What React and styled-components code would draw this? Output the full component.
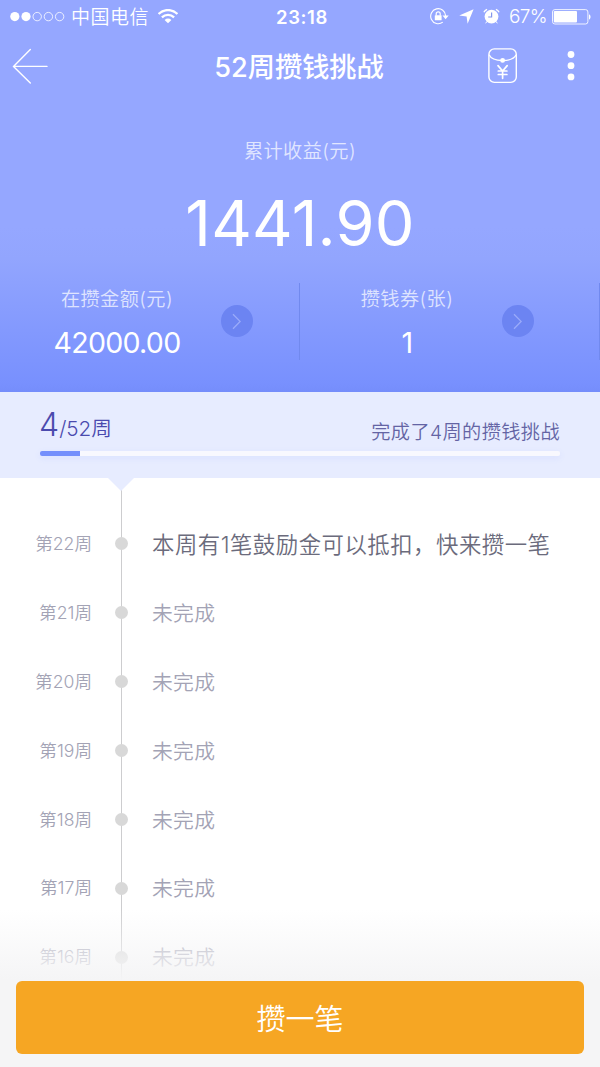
import styled, { createGlobalStyle } from "styled-components";

const GlobalStyle = createGlobalStyle`
  :root {
    --white: #ffffff;
    --blue: #748ffc;
    --pale-blue: #e7ecff;
    --indigo: #4a4aae;
    --orange: #f6a623;
    --grey-line: #cdcdcf;
    --grey-dot: #d8d8d8;
  }

  *,
  *::before,
  *::after {
    box-sizing: border-box;
    margin: 0;
    padding: 0;
  }

  body {
    background-color: #f5f5f6;
    font-family: Inter, "Noto Sans CJK SC", sans-serif;
    font-weight: 350;
  }
`;

const Screen = styled.div`
  display: flex;
  flex-direction: column;
  width: 600px;
  height: 1067px;
  overflow: hidden;
  background-color: var(--white);
`;

/* one line of text in a box of fixed height */
const Line = styled.span`
  display: block;
  height: ${({ $height }) => $height}px;
  line-height: ${({ $height }) => $height}px;
  white-space: nowrap;
`;

const Hero = styled.header`
  flex: none;
  display: flex;
  flex-direction: column;
  height: 392px;
  color: var(--white);
  background: linear-gradient(
    180deg,
    #95a7ff 0%,
    #95a7ff 58%,
    #92a5fe 66%,
    #7890fe 98%,
    #758dfb 100%
  );
`;

const StatusBarEl = styled.div`
  display: grid;
  grid-template-columns: 1fr auto 1fr;
  align-items: center;
  height: 33px;
  padding: 0 9px 0 10px;
`;

const StatusGroup = styled.div`
  display: flex;
  align-items: center;
  justify-content: ${({ $end }) => ($end ? "flex-end" : "flex-start")};
`;

const Carrier = styled(Line)`
  margin: 0 9px 0 6px;
  padding-top: 1px;
  font-size: 19px;
  letter-spacing: 0.5px;
`;

const Clock = styled(Line)`
  padding-left: 3px;
  font-size: 18.5px;
  font-weight: 600;
  letter-spacing: 0.6px;
`;

const Percent = styled(Line)`
  margin: 0 5px 0 9px;
  font-size: 19px;
  letter-spacing: -0.6px;
`;

const IconGap = styled.svg`
  flex: none;
  margin-left: ${({ $gap }) => $gap || 0}px;
`;

const NavBar = styled.nav`
  display: grid;
  grid-template-columns: 1fr auto 1fr;
  align-items: center;
  height: 66px;
  padding: 0 24px 0 12px;
`;

const NavActions = styled.div`
  display: flex;
  align-items: center;
  justify-content: flex-end;
  gap: 49px;
`;

const IconButton = styled.button`
  display: block;
  width: max-content;
  border: none;
  outline: none;
  background: none;
  color: inherit;
  cursor: pointer;

  svg {
    display: block;
  }
`;

const Title = styled.h1`
  height: 36px;
  padding: 2px 0 0 10px;
  font-size: 27.2px;
  font-weight: 500;
  line-height: 36px;
  white-space: nowrap;
`;

const Earnings = styled.section`
  display: flex;
  flex-direction: column;
  align-items: center;
  padding-top: 38px;
`;

const Label = styled(Line)`
  font-size: 19.2px;
  letter-spacing: 0.4px;
  opacity: 0.72;
`;

const Amount = styled(Line)`
  margin-top: 27px;
  font-size: 63px;
  font-weight: 400;
  letter-spacing: 0.2px;
`;

const Stats = styled.section`
  display: grid;
  grid-template-columns: 1fr 1fr;
  margin-top: 29px;
`;

const StatEl = styled.div`
  display: flex;
  align-items: center;
  height: 77px;
  padding-left: ${({ $left }) => $left}px;
  border-right: 1px solid #7189ee;
`;

const StatText = styled.div`
  display: flex;
  flex-direction: column;
  align-items: center;
  width: ${({ $width }) => $width}px;
  padding-top: 2px;
`;

const StatValue = styled(Line)`
  margin-top: 13px;
  font-size: 28.6px;
  font-weight: 400;
  letter-spacing: -0.75px;
`;

const Round = styled(IconButton)`
  display: flex;
  align-items: center;
  justify-content: center;
  width: 32px;
  height: 32px;
  margin: 0 0 1px ${({ $gap }) => $gap}px;
  border-radius: 50%;
  background-color: #6c84f2;
`;

const Progress = styled.section`
  flex: none;
  height: 86px;
  padding: 17px 40px 0;
  background-color: var(--pale-blue);
`;

const ProgressHead = styled.div`
  display: flex;
  justify-content: space-between;
  height: 42px;
`;

const Count = styled(Line)`
  margin-left: -1px;
  color: var(--indigo);
  font-size: 20.7px;

  strong {
    font-size: 32px;
    font-weight: 350;
  }
`;

const Summary = styled(Line)`
  padding-top: 9px;
  color: #6464a4;
  font-size: 19.2px;
  letter-spacing: 0.4px;
`;

const Track = styled.div`
  height: 5px;
  border-radius: 2px;
  background-color: #f8f8fe;
  box-shadow: 0 2px 6px rgba(116, 143, 252, 0.12);
  overflow: hidden;
`;

const Fill = styled.div`
  height: 100%;
  background-color: var(--blue);
`;

const Timeline = styled.ul`
  position: relative;
  flex: none;
  height: 502px;
  padding-top: 31.5px;
  list-style: none;

  &::before {
    content: "";
    position: absolute;
    top: 0;
    bottom: 0;
    left: 121px;
    width: 1px;
    background-color: var(--grey-line);
  }

  &::after {
    content: "";
    position: absolute;
    top: 0;
    left: 108px;
    border: 13.5px solid transparent;
    border-top-color: var(--pale-blue);
    border-bottom: none;
  }
`;

const Week = styled.li`
  position: relative;
  display: grid;
  grid-template-columns: 92px 60px 1fr;
  align-items: center;
  height: 68.9px;
  color: ${({ $current }) => ($current ? "#6b6b7c" : "#a3a3b5")};
`;

const WeekName = styled(Line)`
  color: #a3a3b5;
  font-size: 17.6px;
  text-align: right;
`;

const Dot = styled.span`
  width: 13px;
  height: 13px;
  margin-left: 23px;
  border-radius: 50%;
  background-color: var(--grey-dot);
`;

const WeekText = styled(Line)`
  padding-top: 1px;
  font-size: ${({ $current }) => ($current ? 22.4 : 20.8)}px;
  letter-spacing: ${({ $current }) => ($current ? 0.5 : 0.3)}px;
`;

/* fades the end of the list out behind the button */
const Footer = styled.footer`
  position: relative;
  flex: none;
  height: 157px;
  margin-top: -70px;
  padding: 71px 16px 0;
  background: linear-gradient(
    180deg,
    rgba(245, 245, 246, 0) 0px,
    rgba(245, 245, 246, 0.6) 42px,
    #f5f5f6 70px
  );
`;

const SaveButton = styled.button`
  display: flex;
  align-items: center;
  justify-content: center;
  width: 100%;
  height: 73px;
  padding-bottom: 2px;
  border: none;
  border-radius: 6px;
  background-color: var(--orange);
  color: var(--white);
  font-family: inherit;
  font-size: 29px;
  font-weight: 350;
  cursor: pointer;
`;

const Signal = function () {
  return (
    <IconGap width="55" height="12" viewBox="0 0 55 12">
      {[0, 1, 2, 3, 4].map((i) => (
        <circle
          key={i}
          cx={4.8 + i * 11.2}
          cy="5.6"
          r={i < 2 ? 4.6 : 4.2}
          fill={i < 2 ? "#fff" : "none"}
          stroke={i < 2 ? "none" : "#fff"}
          strokeWidth="0.8"
        />
      ))}
    </IconGap>
  );
};

const Wifi = function () {
  return (
    <IconGap width="20" height="15" viewBox="0 0 20 15" fill="none">
      <path d="M.6 5C6-.2 14-.2 19.4 5" stroke="#fff" strokeWidth="2.4" />
      <path
        d="M3.9 8.3C7.4 5 12.6 5 16.1 8.3"
        stroke="#fff"
        strokeWidth="2.3"
      />
      <path d="M6.6 10.9C8.7 9 11.3 9 13.4 10.9L10 14.3Z" fill="#fff" />
    </IconGap>
  );
};

const RotationLock = function () {
  return (
    <IconGap width="19" height="17" viewBox="0 0 19 17" fill="none">
      <path
        d="M12.8 14.1A7.5 7.5 0 1 1 15.7 8"
        stroke="#fff"
        strokeWidth="1.1"
      />
      <path d="M12.5 7.6H18.7L15.6 11.2Z" fill="#fff" />
      <rect x="4.8" y="7.2" width="6.8" height="5" rx="0.5" fill="#fff" />
      <path
        d="M6.2 7.6V5.8a2 2 0 0 1 4 0V7.6"
        stroke="#fff"
        strokeWidth="1.2"
      />
    </IconGap>
  );
};

const Location = function () {
  return (
    <IconGap $gap={9.5} width="15" height="15" viewBox="0 0 15 15">
      <path d="M14.6.3L8.6 14.8 7.6 7.6.2 6.6Z" fill="#fff" />
    </IconGap>
  );
};

const Alarm = function () {
  return (
    <IconGap $gap={9} width="17" height="17" viewBox="0 0 17 17" fill="none">
      <circle cx="8.5" cy="8.6" r="6.9" fill="#fff" />
      <path
        d="M.9 4.2A6 6 0 0 1 4.1 1.3M16.1 4.2A6 6 0 0 0 12.9 1.3"
        stroke="#fff"
        strokeWidth="1.4"
      />
      <path d="M3.8 13.6L2.7 15.3M13.2 13.6L14.3 15.3" stroke="#fff" />
      <path d="M8.6 4.4V9H5.2" stroke="#8396ed" strokeWidth="1.2" />
    </IconGap>
  );
};

const Battery = function () {
  return (
    <IconGap width="39" height="16" viewBox="0 0 39 16" fill="none">
      <rect
        x="0.5"
        y="0.6"
        width="35.4"
        height="14.4"
        rx="2.4"
        stroke="#fff"
        strokeOpacity="0.85"
      />
      <rect x="1.8" y="2" width="23.2" height="11.6" rx="1" fill="#fff" />
      <path d="M37 5.2C39 6 39 9.8 37 10.6Z" fill="#fff" />
    </IconGap>
  );
};

const StatusBar = function () {
  return (
    <StatusBarEl>
      <StatusGroup>
        <Signal />
        <Carrier $height={26}>中国电信</Carrier>
        <Wifi />
      </StatusGroup>
      <Clock $height={24}>23:18</Clock>
      <StatusGroup $end>
        <RotationLock />
        <Location />
        <Alarm />
        <Percent $height={24}>67%</Percent>
        <Battery />
      </StatusGroup>
    </StatusBarEl>
  );
};

const BackIcon = function () {
  return (
    <svg width="37" height="36" viewBox="0 0 37 36" fill="none">
      <path
        d="M18.3 1.6L1.5 18.4 18.3 35.1M1.5 18.4H35"
        stroke="#fff"
        strokeWidth="1.4"
        strokeLinecap="round"
      />
    </svg>
  );
};

const PurseIcon = function () {
  return (
    <svg width="29" height="36" viewBox="0 0 29 36" fill="none">
      <rect
        x="0.9"
        y="0.9"
        width="27.4"
        height="33.5"
        rx="5.5"
        stroke="#fff"
        strokeWidth="1.4"
      />
      <path
        d="M1.1 6.8C4.5 14.4 24.7 14.4 28.1 6.8"
        stroke="#fff"
        strokeWidth="1.3"
      />
      <circle cx="14.6" cy="12.4" r="2.4" fill="#fff" />
      <path
        d="M10 17.6L14.6 23 19.2 17.6M14.6 23V30.3M10.3 23H18.9M10.3 26.5H18.9"
        stroke="#fff"
        strokeWidth="1.7"
        strokeLinecap="round"
      />
    </svg>
  );
};

const MoreIcon = function () {
  return (
    <svg width="10" height="32" viewBox="0 0 10 32" fill="#fff">
      <circle cx="5" cy="4.5" r="3.4" />
      <circle cx="5" cy="15.7" r="3.4" />
      <circle cx="5" cy="26.9" r="3.4" />
    </svg>
  );
};

const Stat = function ({ label, value, left, width, gap }) {
  return (
    <StatEl $left={left}>
      <StatText $width={width}>
        <Label $height={28}>{label}</Label>
        <StatValue $height={34}>{value}</StatValue>
      </StatText>
      <Round $gap={gap}>
        <svg width="10" height="17" viewBox="0 0 10 17" fill="none">
          <path d="M1 1.2L8.1 8.4 1 15.7" stroke="#9aabfa" strokeWidth="1.3" />
        </svg>
      </Round>
    </StatEl>
  );
};

const weeks = [22, 21, 20, 19, 18, 17, 16];
const done = 4;
const total = 52;

export default function App() {
  return (
    <Screen>
      <GlobalStyle />
      <Hero>
        <StatusBar />
        <NavBar>
          <IconButton aria-label="返回">
            <BackIcon />
          </IconButton>
          <Title>52周攒钱挑战</Title>
          <NavActions>
            <IconButton aria-label="红包">
              <PurseIcon />
            </IconButton>
            <IconButton aria-label="更多">
              <MoreIcon />
            </IconButton>
          </NavActions>
        </NavBar>
        <Earnings>
          <Label $height={28}>累计收益(元)</Label>
          <Amount $height={62}>1441.90</Amount>
        </Earnings>
        <Stats>
          <Stat
            label="在攒金额(元)"
            value="42000.00"
            left={47}
            width={140}
            gap={34}
          />
          <Stat label="攒钱券(张)" value="1" left={47} width={120} gap={35} />
        </Stats>
      </Hero>
      <Progress>
        <ProgressHead>
          <Count $height={32}>
            <strong>{done}</strong>/{total}周
          </Count>
          <Summary $height={28}>完成了{done}周的攒钱挑战</Summary>
        </ProgressHead>
        <Track>
          <Fill style={{ width: `${(done / total) * 100}%` }} />
        </Track>
      </Progress>
      <Timeline>
        {weeks.map((week, i) => (
          <Week key={week} $current={i === 0}>
            <WeekName $height={26}>第{week}周</WeekName>
            <Dot />
            <WeekText $height={30} $current={i === 0}>
              {i === 0
                ? "本周有1笔鼓励金可以抵扣，快来攒一笔"
                : "未完成"}
            </WeekText>
          </Week>
        ))}
      </Timeline>
      <Footer>
        <SaveButton>攒一笔</SaveButton>
      </Footer>
    </Screen>
  );
}
